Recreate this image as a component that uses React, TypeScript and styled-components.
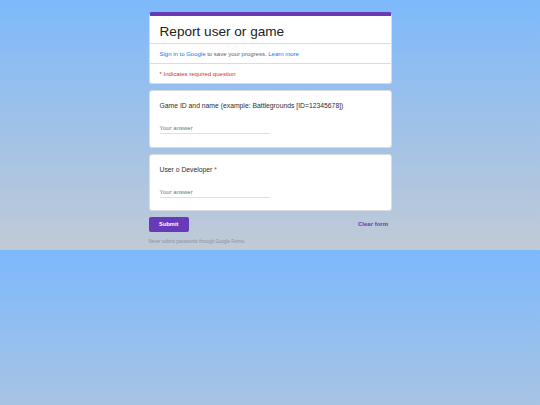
import styled, { createGlobalStyle } from 'styled-components'

const GlobalStyle = createGlobalStyle`
  html {
    background: linear-gradient(180deg, #7db9fb 0%, #c1cad6 100%) 0 0 / 100% 250px repeat;
  }
  body {
    margin: 0;
    font-family: "Liberation Sans", Arial, sans-serif;
    color: #202124;
  }
`

const Page = styled.div`
  height: 250px;
  overflow: hidden;
  display: flex;
  justify-content: center;
`

const Column = styled.div`
  width: 243px;
  padding-top: 12px;
  display: flex;
  flex-direction: column;
  gap: 6px;
`

const Card = styled.div`
  background: #fff;
  border: 1px solid #dadce0;
  border-radius: 3px;
  overflow: hidden;
`

const HeaderCard = styled(Card)`
  border-top: 4.5px solid #673ab7;
`

const FormTitle = styled.h1`
  margin: 0;
  padding: 7.5px 10px 3.5px;
  font-size: 13.6px;
  line-height: 16px;
  font-weight: 400;
  color: #202124;
  border-bottom: 1px solid #dadce0;
`

const InfoRow = styled.div<{ $divider?: boolean }>`
  padding: 0 10px;
  height: 19px;
  display: flex;
  align-items: center;
  font-size: 6px;
  color: #5f6368;
  border-bottom: ${p => (p.$divider ? '1px solid #dadce0' : 'none')};
`

const Link = styled.span`
  color: #1a73e8;
  white-space: pre;
`

const Plain = styled.span`
  white-space: pre;
`

const Required = styled.span`
  color: #d93025;
`

const QuestionCard = styled(Card)`
  padding: 10px 10px 12.5px;
`

const QuestionTitle = styled.div`
  font-size: 6.8px;
  line-height: 10px;
  color: #2d2e30;
`

const Star = styled.span`
  color: #d93025;
`

const Answer = styled.div`
  margin-top: 13px;
  width: 50%;
  height: 8px;
  line-height: 8px;
  padding-bottom: 1px;
  font-size: 6px;
  color: #70757a;
  border-bottom: 1px solid #e0e0e0;
`

const Actions = styled.div`
  display: flex;
  align-items: center;
  justify-content: space-between;
`

const SubmitButton = styled.button`
  width: 40.5px;
  height: 14.5px;
  padding: 0;
  border: none;
  border-radius: 2px;
  background: #673ab7;
  color: #fff;
  font-family: "Liberation Sans", Arial, sans-serif;
  font-size: 5.7px;
  font-weight: 700;
`

const ClearButton = styled.button`
  border: none;
  background: transparent;
  padding: 0 3.5px;
  color: #673ab7;
  font-family: "Liberation Sans", Arial, sans-serif;
  font-size: 6px;
  font-weight: 700;
`

const Footer = styled.div`
  margin-top: 1px;
  font-size: 4.5px;
  line-height: 6px;
  color: #8a9099;
`

export default function App() {
  return (
    <>
      <GlobalStyle />
      <Page>
        <Column>
          <HeaderCard>
            <FormTitle>Report user or game</FormTitle>
            <InfoRow $divider>
              <Link>Sign in to Google</Link>
              <Plain> to save your progress. </Plain>
              <Link>Learn more</Link>
            </InfoRow>
            <InfoRow>
              <Required>* Indicates required question</Required>
            </InfoRow>
          </HeaderCard>

          <QuestionCard>
            <QuestionTitle>Game ID and name (example: Battlegrounds [ID=12345678])</QuestionTitle>
            <Answer>Your answer</Answer>
          </QuestionCard>

          <QuestionCard>
            <QuestionTitle>
              User o Developer <Star>*</Star>
            </QuestionTitle>
            <Answer>Your answer</Answer>
          </QuestionCard>

          <Actions>
            <SubmitButton>Submit</SubmitButton>
            <ClearButton>Clear form</ClearButton>
          </Actions>

          <Footer>Never submit passwords through Google Forms.</Footer>
        </Column>
      </Page>
    </>
  )
}
